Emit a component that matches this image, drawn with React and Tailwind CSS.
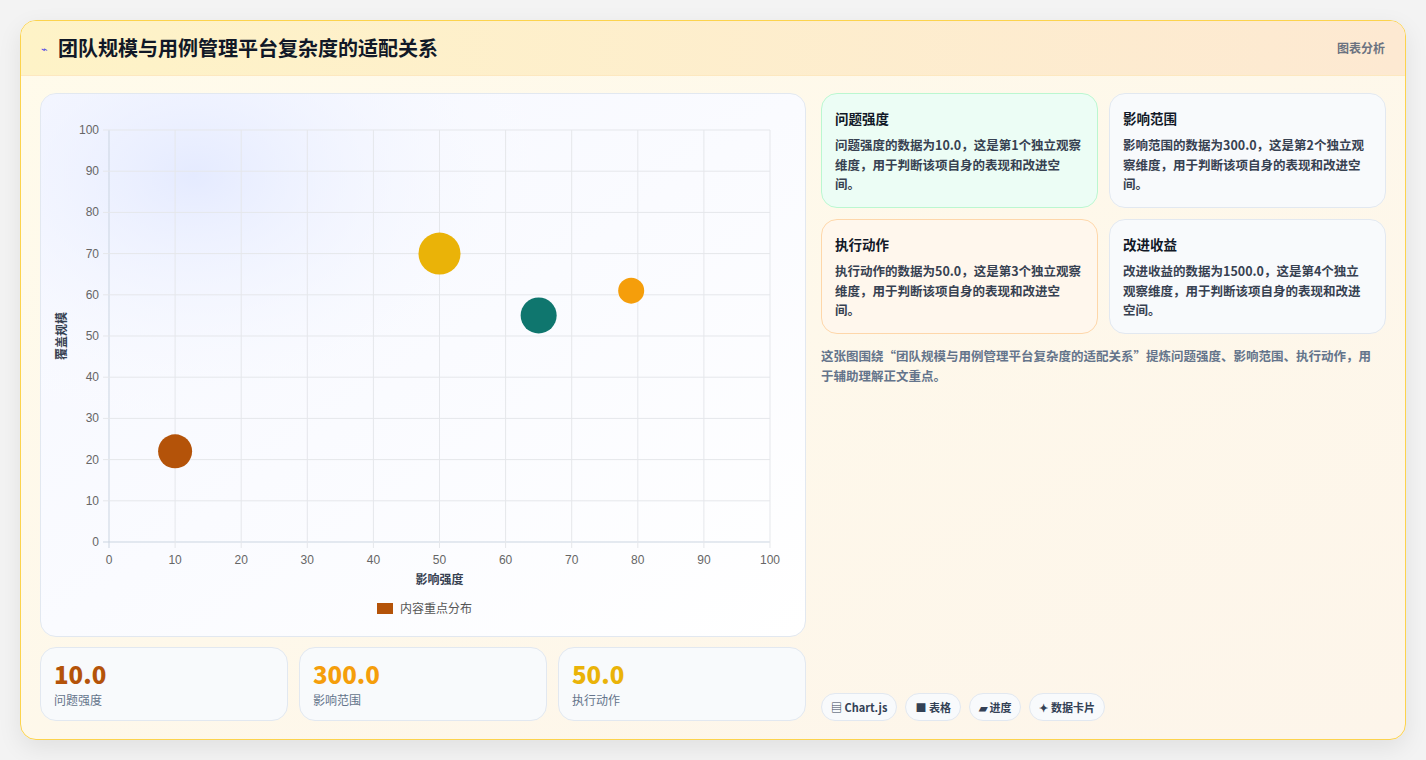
const font = { fontFamily: '"Noto Sans CJK SC", "Noto Sans", sans-serif' };

const bubbles = [
  { x: 10, y: 22, r: 17, c: '#b45309' },
  { x: 50, y: 70, r: 21, c: '#eab308' },
  { x: 65, y: 55, r: 18, c: '#0f766e' },
  { x: 79, y: 61, r: 13, c: '#f59e0b' },
];

function Chart() {
  const L = 68, R = 729, T = 36, B = 448;
  const px = v => L + (v / 100) * (R - L);
  const py = v => B - (v / 100) * (B - T);
  const ticks = [0, 10, 20, 30, 40, 50, 60, 70, 80, 90, 100];
  return (
    <svg width="765" height="543" viewBox="0 0 765 543" className="block">
      <defs>
        <radialGradient id="glow" cx="0.2" cy="0.15" r="0.5">
          <stop offset="0" stopColor="#e0e7ff" stopOpacity="0.8" />
          <stop offset="1" stopColor="#ffffff" stopOpacity="0" />
        </radialGradient>
      </defs>
      <rect width="765" height="543" fill="url(#glow)" />
      {ticks.map(t => (
        <g key={t}>
          <line x1={px(t)} x2={px(t)} y1={T} y2={B + 6} stroke={t === 0 ? '#cbd5e1' : '#e5e7eb'} />
          <line x1={L - 6} x2={R} y1={py(t)} y2={py(t)} stroke={t === 0 ? '#cbd5e1' : '#e5e7eb'} />
          <text x={px(t)} y={B + 22} fontSize="12" fill="#666" textAnchor="middle" fontFamily="Liberation Sans, sans-serif">{t}</text>
          <text x={L - 10} y={py(t) + 4} fontSize="12" fill="#666" textAnchor="end" fontFamily="Liberation Sans, sans-serif">{t}</text>
        </g>
      ))}
      {bubbles.map((b, i) => (
        <circle key={i} cx={px(b.x)} cy={py(b.y)} r={b.r} fill={b.c} />
      ))}
      <text x={(L + R) / 2} y={490} fontSize="12" fontWeight="700" fill="#374151" textAnchor="middle" style={font}>影响强度</text>
      <text x="0" y="0" fontSize="12" fontWeight="700" fill="#374151" textAnchor="middle" style={font} transform="translate(25 242) rotate(-90)">覆盖规模</text>
      <rect x="336" y="509" width="16" height="11" fill="#b45309" />
      <text x="359" y="519" fontSize="12" fill="#555" style={font}>内容重点分布</text>
    </svg>
  );
}

const cards = [
  { t: '问题强度', d: '问题强度的数据为10.0，这是第1个独立观察维度，用于判断该项自身的表现和改进空间。', cls: 'bg-[#ecfdf5] border-[#bbf7d0]' },
  { t: '影响范围', d: '影响范围的数据为300.0，这是第2个独立观察维度，用于判断该项自身的表现和改进空间。', cls: 'bg-[#f8fafc] border-[#e2e8f0]' },
  { t: '执行动作', d: '执行动作的数据为50.0，这是第3个独立观察维度，用于判断该项自身的表现和改进空间。', cls: 'bg-[#fff7ed] border-[#fed7aa]' },
  { t: '改进收益', d: '改进收益的数据为1500.0，这是第4个独立观察维度，用于判断该项自身的表现和改进空间。', cls: 'bg-[#f8fafc] border-[#e2e8f0]' },
];

const stats = [
  { v: '10.0', l: '问题强度', c: 'text-[#b45309]' },
  { v: '300.0', l: '影响范围', c: 'text-[#f59e0b]' },
  { v: '50.0', l: '执行动作', c: 'text-[#eab308]' },
];

const tags = ['▤ Chart.js', '■ 表格', '▰ 进度', '✦ 数据卡片'];

export default function App() {
  return (
    <div className="w-[1426px] h-[760px] bg-[#f3f3f3] pt-5 px-5" style={font}>
      <div className="w-[1386px] h-[720px] rounded-2xl border border-[#fcd34d] overflow-hidden shadow-[0_8px_24px_rgba(0,0,0,0.08)] flex flex-col bg-gradient-to-br from-[#fffbeb] to-[#fdf5ea]">
        {/* Header */}
        <div className="h-[55px] shrink-0 flex items-center justify-between px-5 bg-gradient-to-r from-[#fef3c7] to-[#fde9d2] border-b border-[#fde8c0]">
          <div className="flex items-center gap-2.5">
            <span className="text-[11px] text-[#4f46e5]">⌁</span>
            <h1 className="text-[20px] font-bold text-[#111827]">团队规模与用例管理平台复杂度的适配关系</h1>
          </div>
          <span className="text-xs font-bold text-[#6b7280]">图表分析</span>
        </div>
        {/* Body */}
        <div className="flex-1 flex gap-[15px] px-[19px] pt-[17px] pb-[18px]">
          <div className="w-[766px] flex flex-col gap-[10px]">
            <div className="h-[544px] rounded-2xl border border-[#e2e8f0] bg-gradient-to-br from-[#f5f7ff] to-white overflow-hidden">
              <Chart />
            </div>
            <div className="flex gap-[11px]">
              {stats.map(s => (
                <div key={s.l} className="w-[248px] h-[74px] rounded-2xl border border-[#e2e8f0] bg-[#f8fafc] px-[13px] pt-[10px]">
                  <div className={`text-[24px] font-black leading-[32px] ${s.c}`}>{s.v}</div>
                  <div className="text-xs text-[#64748b] mt-0.5">{s.l}</div>
                </div>
              ))}
            </div>
          </div>
          <div className="flex-1 flex flex-col">
            <div className="grid grid-cols-2 gap-[11px]">
              {cards.map(c => (
                <div key={c.t} className={`h-[115px] rounded-2xl border pl-[13px] pr-[14px] pt-[14px] ${c.cls}`}>
                  <div className="text-[13.5px] font-bold text-[#111827] mb-[7px]">{c.t}</div>
                  <div className="text-[12.5px] font-bold text-[#374151] leading-[19.5px]">{c.d}</div>
                </div>
              ))}
            </div>
            <p className="mt-[12px] text-[12.5px] font-bold text-[#64748b] leading-[20px] pr-1">
              这张图围绕“团队规模与用例管理平台复杂度的适配关系”提炼问题强度、影响范围、执行动作，用于辅助理解正文重点。
            </p>
            <div className="mt-auto flex gap-2">
              {tags.map(t => (
                <span key={t} className="h-[28px] px-[9px] flex items-center rounded-full border border-[#e2e8f0] bg-[#f8fafc] text-[11px] font-bold text-[#334155]">{t}</span>
              ))}
            </div>
          </div>
        </div>
      </div>
    </div>
  );
}
